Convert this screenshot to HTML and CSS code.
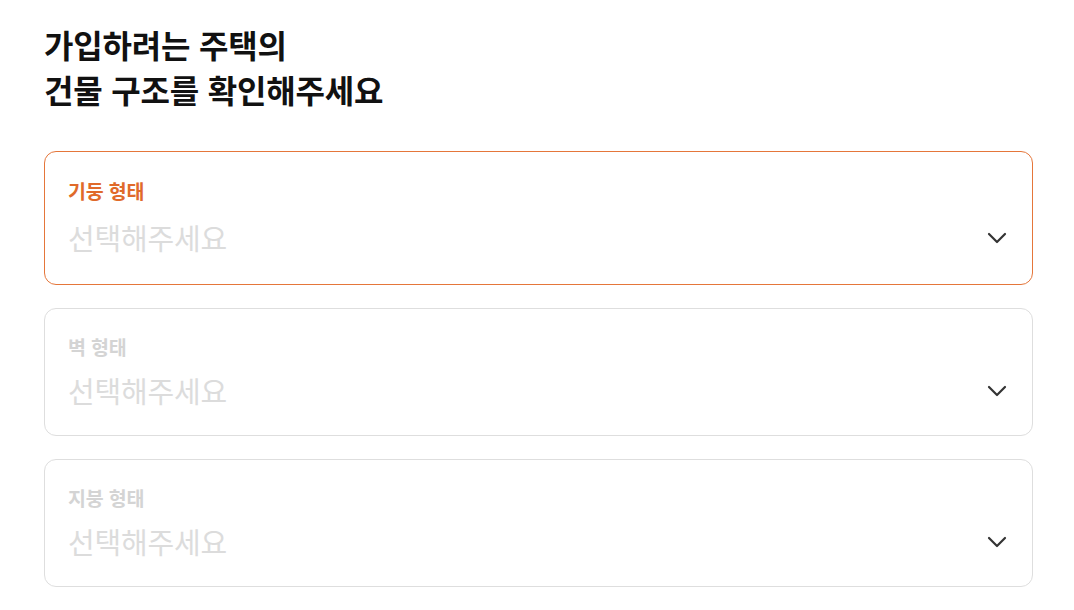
FILE: index.html
```html
<!DOCTYPE html>
<html lang="ko">
<head>
<meta charset="utf-8">
<link rel="stylesheet" href="styles.css">
</head>
<body>
<main class="page">
  <h1 class="title">가입하려는 주택의<br>건물 구조를 확인해주세요</h1>
  <div class="fields">
    <div class="field field--active">
      <div class="field__body">
        <div class="field__label">기둥 형태</div>
        <div class="field__value">선택해주세요</div>
      </div>
      <svg class="chevron" width="20" height="12" viewBox="0 0 20 12"><path d="M2 2 L10 10 L18 2" fill="none" stroke="#333" stroke-width="2.2" stroke-linecap="round" stroke-linejoin="round"/></svg>
    </div>
    <div class="field">
      <div class="field__body">
        <div class="field__label">벽 형태</div>
        <div class="field__value">선택해주세요</div>
      </div>
      <svg class="chevron" width="20" height="12" viewBox="0 0 20 12"><path d="M2 2 L10 10 L18 2" fill="none" stroke="#333" stroke-width="2.2" stroke-linecap="round" stroke-linejoin="round"/></svg>
    </div>
    <div class="field">
      <div class="field__body">
        <div class="field__label">지붕 형태</div>
        <div class="field__value">선택해주세요</div>
      </div>
      <svg class="chevron" width="20" height="12" viewBox="0 0 20 12"><path d="M2 2 L10 10 L18 2" fill="none" stroke="#333" stroke-width="2.2" stroke-linecap="round" stroke-linejoin="round"/></svg>
    </div>
  </div>
</main>
</body>
</html>
```
FILE: styles.css
```css
* { box-sizing: border-box; }
html, body { margin: 0; padding: 0; background: #fff; }
body {
  font-family: "Noto Sans CJK KR", "Noto Sans", sans-serif;
  color: #111;
}
.page {
  padding: 22px 41px 0 44px;
}
.title {
  margin: 0;
  font-size: 32px;
  line-height: 45px;
  font-weight: 700;
  color: #111;
  letter-spacing: -0.2px;
}
.fields {
  margin-top: 39px;
  display: flex;
  flex-direction: column;
  gap: 23px;
}
.field {
  display: flex;
  align-items: flex-end;
  justify-content: space-between;
  border: 1px solid #dedede;
  border-radius: 12px;
  padding: 26px 25px 27px 23px;
}
.field--active {
  border-color: #e5763a;
  padding-top: 27px;
  padding-bottom: 29px;
}
.field__body {
  display: flex;
  flex-direction: column;
  gap: 13px;
}
.field--active .field__body { gap: 16px; }
.field__label {
  font-size: 19.5px;
  line-height: 24px;
  font-weight: 700;
  color: #d4d4d4;
  letter-spacing: -0.2px;
}
.field--active .field__label { color: #e06a2a; }
.field__value {
  font-size: 29px;
  line-height: 36px;
  color: #dcdcdc;
  letter-spacing: -0.2px;
}
.chevron {
  display: block;
  margin-bottom: 11px;
}
```
